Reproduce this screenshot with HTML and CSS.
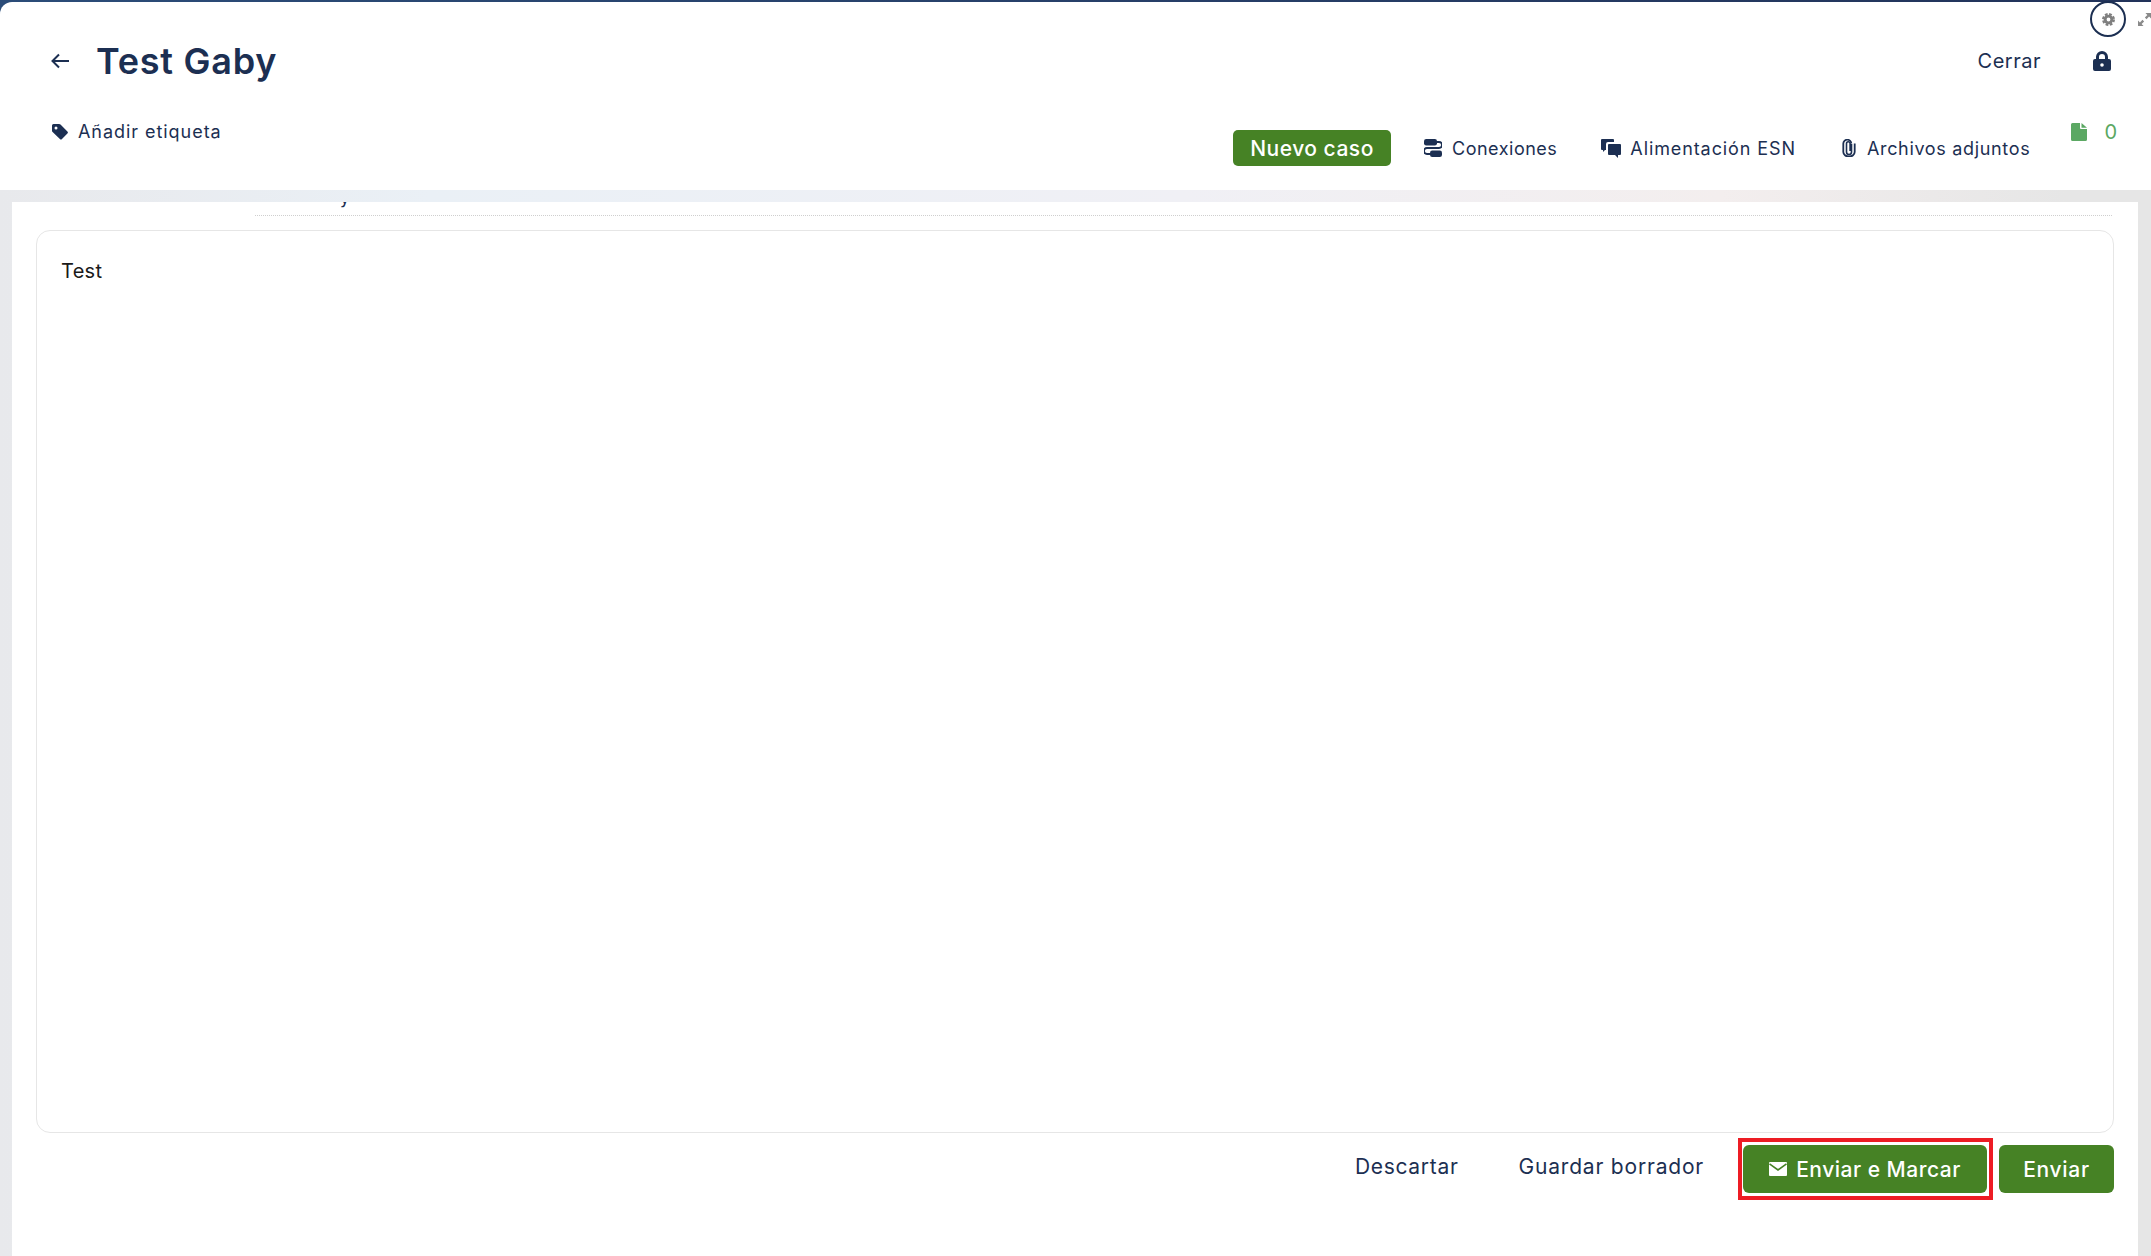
FILE: index.html
```html
<!DOCTYPE html>
<html lang="es">
<head>
<meta charset="utf-8">
<title>Test Gaby</title>
<link rel="stylesheet" href="styles.css">
</head>
<body>
<div class="page">
  <header class="header">
    <div class="corner-tools">
      <button class="gear-btn" aria-label="Ajustes">
        <svg class="gear" viewBox="0 0 24 24"><circle cx="12" cy="12" r="6.2" fill="none" stroke="#7f7f7f" stroke-width="5.4"/><circle cx="12" cy="12" r="10" fill="none" stroke="#7f7f7f" stroke-width="4" stroke-dasharray="5 2.85"/></svg>
      </button>
      <svg class="expand" viewBox="0 0 14 14"><path d="M8 0h6v6l-2.100-2.100-2.700 2.700-1.800-1.800 2.700-2.700zM6 14H0V8l2.100 2.100 2.700-2.700 1.800 1.800-2.700 2.700z" fill="#8a8a8a"/></svg>
    </div>
    <div class="title-row">
      <div class="title-left">
        <svg class="back" viewBox="0 0 18 16"><path d="M8 1.500 1.500 8 8 14.500M2 8h16" fill="none" stroke="#1c2f52" stroke-width="2"/></svg>
        <h1 class="title">Test Gaby</h1>
      </div>
      <div class="title-right">
        <span class="close">Cerrar</span>
        <svg class="lock" viewBox="0 0 18 20"><path d="M3 8V6a6 6 0 0 1 12 0v2h1a2 2 0 0 1 2 2v8a2 2 0 0 1-2 2H2a2 2 0 0 1-2-2v-8a2 2 0 0 1 2-2zm3 0h6V6a3 3 0 0 0-6 0z" fill="#1c2f52"/><circle cx="9" cy="14" r="1.800" fill="#fff"/></svg>
      </div>
    </div>
    <div class="tab-row">
      <div class="tag">
        <svg class="tag-icon" viewBox="0 0 16 16"><path d="M0 1.500A1.500 1.500 0 0 1 1.500 0h5.600a2 2 0 0 1 1.400.6l6.900 6.900a1.500 1.500 0 0 1 0 2.100l-5.400 5.400a1.500 1.500 0 0 1-2.100 0L.6 8.100A2 2 0 0 1 0 6.700zM4 5.500a1.500 1.500 0 1 0 0-3 1.500 1.500 0 0 0 0 3z" fill="#1c2f52"/></svg>
        <span>Añadir etiqueta</span>
      </div>
      <div class="tabs">
        <button class="new-case">Nuevo caso</button>
        <span class="tab tab-conn">
          <svg class="ic-conn" viewBox="0 0 18 18"><rect x="0" y="0" width="13" height="6.500" rx="2.200" fill="#1c2f52"/><rect x="6" y="11.500" width="12" height="6.500" rx="2.200" fill="#1c2f52"/><path d="M12 3h3a2.700 2.700 0 0 1 0 6H3a2.700 2.700 0 0 0 0 6h4" fill="none" stroke="#1c2f52" stroke-width="1.800"/></svg>
          Conexiones
        </span>
        <span class="tab tab-feed">
          <svg class="ic-feed" viewBox="0 0 20 19"><path d="M1 0h11a1 1 0 0 1 1 1v2H7a2 2 0 0 0-2 2v6H4l-2 2v-2H1a1 1 0 0 1-1-1V1a1 1 0 0 1 1-1z" fill="#1c2f52"/><path d="M8 5h11a1 1 0 0 1 1 1v9a1 1 0 0 1-1 1h-2v3l-3-3H8a1 1 0 0 1-1-1V6a1 1 0 0 1 1-1z" fill="#1c2f52"/></svg>
          Alimentación ESN
        </span>
        <span class="tab tab-files">
          <svg class="ic-clip" viewBox="0 0 14 18"><path d="M9.500 5v8a2.500 2.500 0 0 1-5 0V4.500a1.800 1.800 0 0 1 3.600 0V12" fill="none" stroke="#1c2f52" stroke-width="1.600"/><path d="M12.700 4.500V13a5.700 4.500 0 0 1-11.400 0V4.500a4 3.800 0 0 1 8 0" fill="none" stroke="#1c2f52" stroke-width="1.800"/></svg>
          Archivos adjuntos
        </span>
        <span class="count">
          <svg class="ic-file" viewBox="0 0 16 18"><path d="M1.500 0H9v5a1 1 0 0 0 1 1h6v10.500a1.500 1.500 0 0 1-1.500 1.500h-13A1.500 1.500 0 0 1 0 16.500v-15A1.500 1.500 0 0 1 1.500 0zM10.500 0 16 4.800h-5.500z" fill="#5ba863"/></svg>
          0
        </span>
      </div>
    </div>
  </header>
  <div class="band">
    <main class="panel">
      <div class="clipped-row"><span class="clipped-text">y</span></div>
      <div class="editor"><p class="body-text">Test</p></div>
      <div class="actions">
        <span class="link link-discard">Descartar</span>
        <span class="link link-save">Guardar borrador</span>
        <span class="highlight">
          <button class="btn btn-mark">
            <svg class="ic-mail" viewBox="0 0 18 14"><path d="M1 0h16a1 1 0 0 1 1 1v12a1 1 0 0 1-1 1H1a1 1 0 0 1-1-1V1a1 1 0 0 1 1-1z" fill="#fff"/><path d="M0.500 1.800 9 8l8.500-6.200" fill="none" stroke="#468225" stroke-width="1.600"/></svg>
            Enviar e Marcar
          </button>
        </span>
        <button class="btn btn-send">Enviar</button>
      </div>
    </main>
  </div>
</div>
</body>
</html>
```
FILE: styles.css
```css
* { box-sizing: border-box; }
html, body { margin: 0; height: 100%; overflow: hidden; background: #fff; }
body { font-family: "Inter", "Open Sans", sans-serif; color: #1c2f52; }
button { font-family: inherit; border: 0; cursor: pointer; }

.page { height: 1256px; display: flex; flex-direction: column; background: linear-gradient(90deg, #2b4c78, #22335a); }

.header {
  position: relative;
  height: 188px;
  margin-top: 2px;
  background: #fff;
  border-radius: 12px 0 0 0;
  flex: none;
}
.corner-tools { position: absolute; top: -1px; right: 0; display: flex; align-items: center; }
.gear-btn {
  width: 36px; height: 36px; border-radius: 50%;
  background: #fff; border: 2px solid #1c2f52; padding: 0;
  display: flex; align-items: center; justify-content: center;
}
.gear { width: 13px; height: 13px; }
.expand { width: 13px; height: 13px; margin-left: 12px; }

.title-row { height: 118px; display: flex; justify-content: space-between; align-items: center; padding: 0 40px 0 51px; }
.title-left, .title-right { display: flex; align-items: center; }
.back { width: 18px; height: 16px; }
.title { margin: 0 0 0 27px; font-size: 36px; font-weight: 600; letter-spacing: 0.75px; line-height: 44px; color: #1c2f52; }
.close { font-size: 20px; letter-spacing: 0.5px; }
.lock { width: 18px; height: 20px; margin-left: 52px; }

.tab-row { height: 70px; display: flex; justify-content: space-between; align-items: flex-start; padding: 0 34px 0 52px; }
.tag { display: flex; align-items: center; height: 24px; margin-top: -1px; font-size: 18px; letter-spacing: 0.95px; gap: 10px; }
.tag-icon { width: 16px; height: 16px; margin-top: 1px; }
.tabs { display: flex; align-items: flex-start; }
.new-case {
  height: 36px; width: 158px; margin-top: 10px; background: #468225; color: #fff;
  border-radius: 5px; font-size: 21px; font-weight: 500; letter-spacing: 0.5px; padding: 0;
}
.tab { display: flex; align-items: center; height: 36px; margin-top: 10px; font-size: 18px; white-space: nowrap; }
.tab-conn { margin-left: 33px; gap: 10px; letter-spacing: 0.5px; }
.tab-feed { margin-left: 44px; gap: 9px; letter-spacing: 0.9px; }
.tab-files { margin-left: 46px; gap: 11px; letter-spacing: 0.67px; }
.ic-conn { width: 18px; height: 18px; }
.ic-feed { width: 20px; height: 19px; }
.ic-clip { width: 14px; height: 18px; }
.count { display: flex; align-items: center; height: 24px; margin-left: 41px; gap: 17px; color: #5ba863; font-size: 20px; }
.ic-file { width: 16px; height: 18px; }

.band {
  flex: 1; min-height: 0; padding: 12px 13px 0 12px;
  background: linear-gradient(90deg, #e8e9ec 0%, #eaf0f6 20%, #f0f0f5 55%, #f3eeee 80%, #e6e6e6 96%);
}
.panel { height: 100%; background: #fff; padding: 0 24px 0 24px; display: flex; flex-direction: column; }

.clipped-row {
  height: 14px; margin: 0 2px 0 219px; border-bottom: 1px dotted #cfcfcf;
  overflow: hidden; display: flex; align-items: flex-end;
}
.clipped-text { font-size: 17px; line-height: 20px; margin: 0 0 -6px 85px; transform: translateY(-13px); }

.editor { height: 903px; margin-top: 14px; border: 1.5px solid #e6e6e6; border-radius: 14px; padding: 28px 24px; }
.body-text { margin: 0; font-size: 20px; line-height: 24px; letter-spacing: 0.3px; color: #1a1a1a; }

.actions { display: flex; align-items: flex-start; justify-content: flex-end; margin-top: 5px; }
.link { font-size: 21px; line-height: 26px; margin-top: 16px; white-space: nowrap; }
.link-discard { margin-right: 60px; letter-spacing: 0.7px; }
.link-save { margin-right: 34px; letter-spacing: 0.8px; }
.highlight { display: block; border: 4px solid #ed1c24; padding: 3px 2px 3px 1px; margin-right: 6px; background: #fff; }
.btn { display: flex; align-items: center; justify-content: center; height: 48px; background: #468225; color: #fff; border-radius: 6px; font-size: 21px; font-weight: 500; letter-spacing: 0.7px; padding: 0; }
.btn-mark { width: 244px; gap: 9px; letter-spacing: 0.5px; }
.btn-send { width: 115px; margin-top: 7px; }
.ic-mail { width: 18px; height: 14px; }
```
